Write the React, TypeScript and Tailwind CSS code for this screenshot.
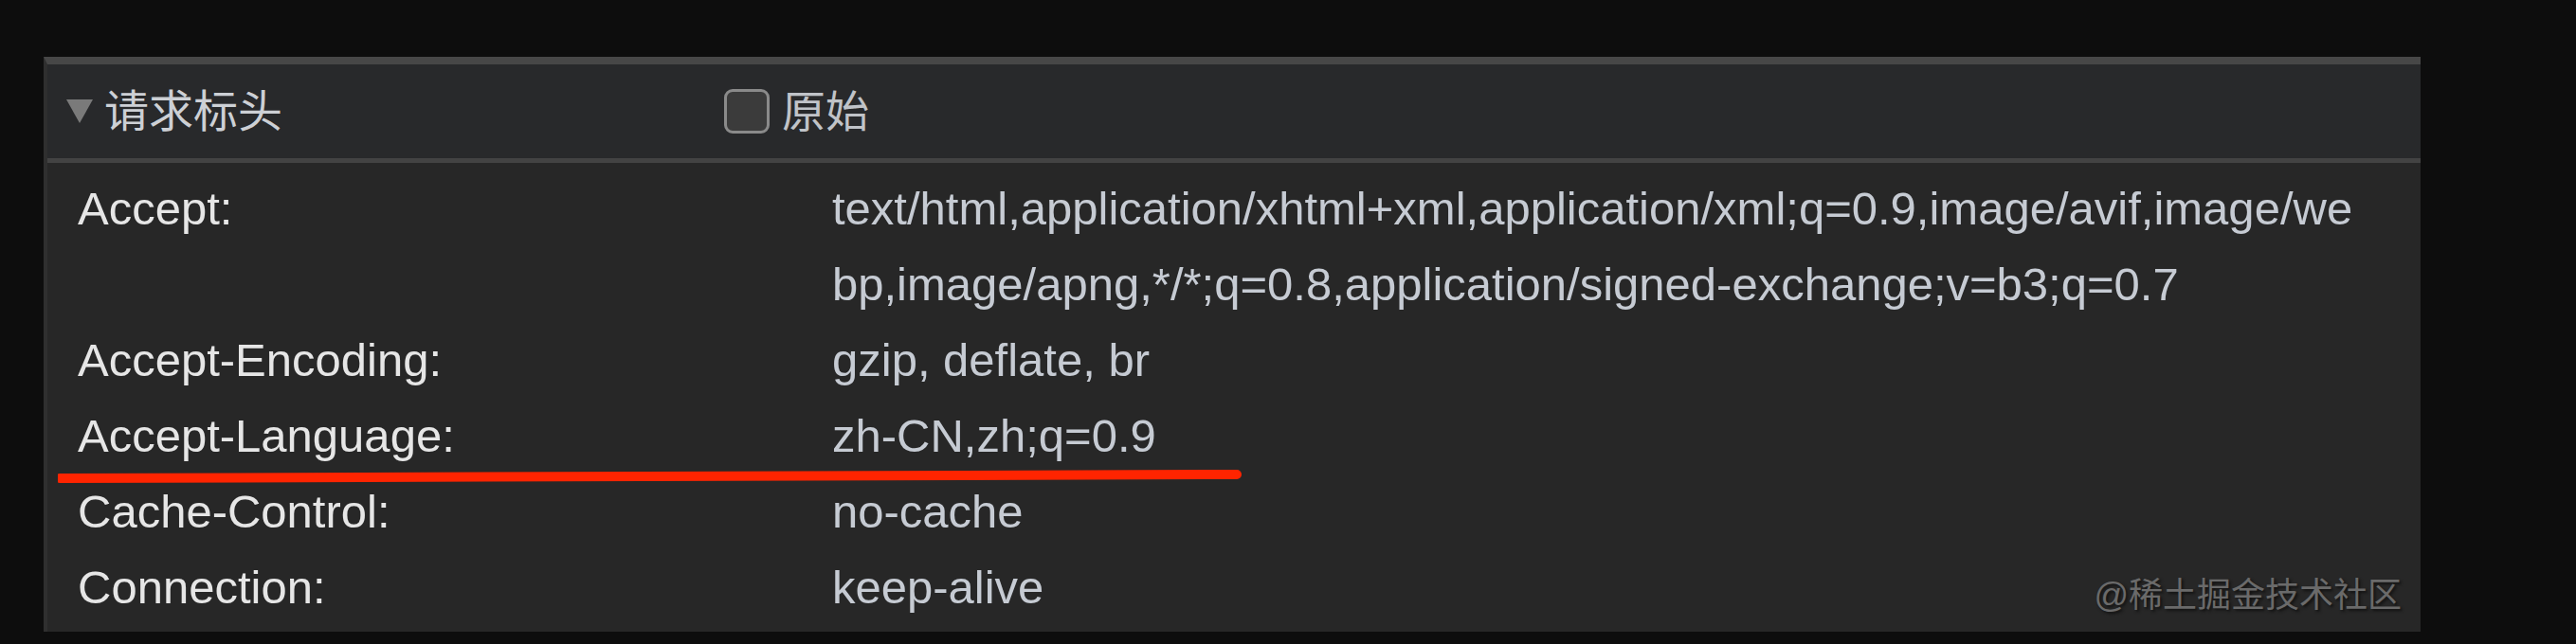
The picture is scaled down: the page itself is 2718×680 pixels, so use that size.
const rows: { name: string; lines: string[] }[] = [
  {
    name: "Accept:",
    lines: [
      "text/html,application/xhtml+xml,application/xml;q=0.9,image/avif,image/we",
      "bp,image/apng,*/*;q=0.8,application/signed-exchange;v=b3;q=0.7",
    ],
  },
  { name: "Accept-Encoding:", lines: ["gzip, deflate, br"] },
  { name: "Accept-Language:", lines: ["zh-CN,zh;q=0.9"] },
  { name: "Cache-Control:", lines: ["no-cache"] },
  { name: "Connection:", lines: ["keep-alive"] },
]

export default function App() {
  return (
    <div className="h-[680px] w-[2718px] bg-[#0d0d0d] pt-[60px] pl-[46px] font-['Liberation_Sans','Noto_Sans_CJK_SC',sans-serif]">
      <section className="relative flex h-[607px] w-[2508px] flex-col border-t-[8px] border-l-[4px] border-t-[#474747] border-l-[#2f2f2f] bg-[#272727]">
        {/* header */}
        <div className="flex h-[104px] items-center border-b-[5px] border-b-[#434343] bg-[#28292b]">
          <div className="flex w-[714px] items-center gap-[12px] pl-[20px]">
            <svg width="28" height="25" viewBox="0 0 28 25">
              <polygon points="0,0 28,0 14,25" fill="#7a7a7a" />
            </svg>
            <span className="text-[47px] leading-none text-[#cdd0d5]">请求标头</span>
          </div>
          <div className="flex items-center gap-[13px]">
            <span className="block h-[47px] w-[48px] rounded-[9px] border-[3px] border-[#8a8a8a] bg-[#3b3b3b]" />
            <span className="text-[46px] leading-none text-[#c0c3c8]">原始</span>
          </div>
        </div>

        {/* rows */}
        <div className="flex flex-col pt-[8px] text-[49px] leading-[80px]">
          {rows.map((r) => (
            <div key={r.name} className="flex">
              <span className="w-[828px] shrink-0 pl-[32px] text-[#e6e6e6]">{r.name}</span>
              <div className="flex flex-col text-[#c6cbd3]">
                {r.lines.map((l) => (
                  <span key={l} className="block whitespace-nowrap">
                    {l}
                  </span>
                ))}
              </div>
            </div>
          ))}
        </div>

        {/* red annotation line */}
        <svg
          className="absolute left-[11px] top-[424px]"
          width="1250"
          height="20"
          viewBox="0 0 1250 20"
        >
          <line x1="2" y1="13" x2="1244" y2="9" stroke="#ff2400" strokeWidth="10" strokeLinecap="round" />
        </svg>

        {/* watermark */}
        <span className="absolute right-[20px] bottom-[20px] text-[36px] leading-none text-[#6a6a6a] [text-shadow:2px_2px_3px_#111]">
          @稀土掘金技术社区
        </span>
      </section>
    </div>
  )
}
